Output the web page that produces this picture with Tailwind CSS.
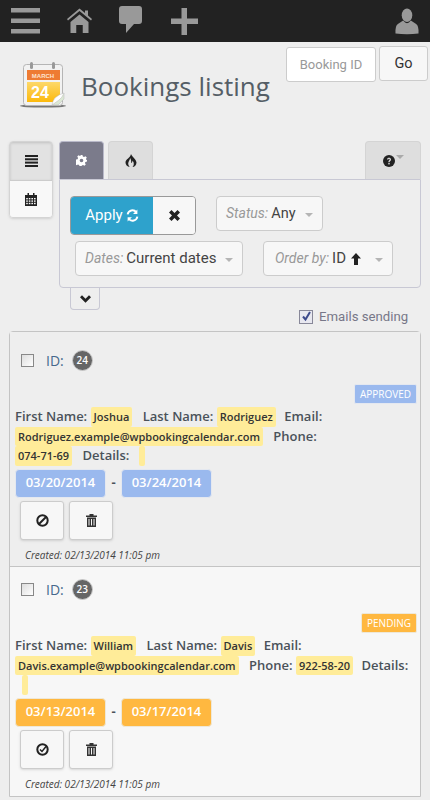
<!DOCTYPE html>
<html lang="en">
<head>
  <meta charset="UTF-8">
  <meta name="viewport" content="width=device-width, initial-scale=1.0"/>
  <title>Bookings listing</title>
  <script src="https://cdn.jsdelivr.net/npm/@tailwindcss/browser@4"></script>
</head>
<body class="bg-[#eeeeee] font-['Open_Sans',sans-serif] overflow-hidden h-[800px]">

  <!-- top bar -->
  <div class="h-[42px] bg-[#222222] flex items-center relative">
    <svg class="ml-[11px]" width="29" height="26" viewBox="0 0 29 26" fill="#999"><rect width="29" height="4.5" y="0"/><rect width="29" height="4.5" y="10.5"/><rect width="29" height="4.5" y="21"/></svg>
    <svg class="ml-[27px]" width="25" height="26" viewBox="0 0 25 26" fill="#999"><path d="M12.5 0.500 L18 5 V2.500 H21 V7.500 L25 11 L24 12.500 L12.5 3 L1 12.500 L0 11 Z"/><path d="M3.500 14 L12.500 6.500 L21.500 14 V25 H15.500 V17 H9.500 V25 H3.500 Z"/><rect x="9.500" y="17" width="6" height="8" fill="#222"/></svg>
    <svg class="ml-[27px] -mt-[3px]" width="23" height="28" viewBox="0 0 23 28" fill="#999"><path d="M3 0 H20 Q23 0 23 3 V15 Q23 18 20 18 H15 L7 27 V18 H3 Q0 18 0 15 V3 Q0 0 3 0 Z"/></svg>
    <svg class="ml-[29px]" width="27" height="27" viewBox="0 0 27 27" fill="#999"><rect x="10.5" y="0" width="5.5" height="27"/><rect x="0" y="10.5" width="27" height="5.5"/></svg>
    <svg class="ml-auto mr-[11px]" width="24" height="27" viewBox="0 0 25 27" fill="#999"><ellipse cx="12.5" cy="7" rx="5.5" ry="7"/><path d="M8.5 12.5 Q12.5 18 16.5 12.5 L22 16 Q25 18 24.5 26 Q12.5 27.5 0.5 26 Q0 18 3 16 Z"/></svg>
  </div>

  <!-- title and booking search -->
  <div class="h-[99px] relative flex">
    <svg class="ml-[20px] mt-[19px]" width="47" height="47" viewBox="0 0 47 47">
      <defs><linearGradient id="calYellow" x1="0" y1="0" x2="0" y2="1"><stop offset="0" stop-color="#fdd86a"/><stop offset="1" stop-color="#fcb90c"/></linearGradient></defs>
      <ellipse cx="23" cy="45" rx="23" ry="1.6" fill="#777"/>
      <rect x="3.500" y="3.500" width="39" height="41" rx="3" fill="#f2f2f2" stroke="#b5b5b5"/>
      <rect x="10" y="1" width="3" height="7" rx="1.500" fill="#999"/>
      <rect x="32" y="1" width="3" height="7" rx="1.500" fill="#999"/>
      <rect x="7" y="9" width="33" height="10" fill="#ee7b33"/>
      <text x="23" y="16.500" text-anchor="middle" font-size="6" font-weight="700" fill="#fde4d0" font-family="Liberation Sans">MARCH</text>
      <rect x="7" y="21" width="33" height="20" fill="url(#calYellow)"/>
      <text x="20" y="37" text-anchor="middle" font-size="16" font-weight="700" fill="#fff" font-family="Liberation Sans">24</text>
      <path d="M32 44 L44 32 V38 L38 44 Z" fill="#dce8d4" stroke="#bbb" stroke-width=".5"/>
      <path d="M32 44 Q33 35 44 32 Q42 37 39 39 Z" fill="#fff" stroke="#bbb" stroke-width=".5"/>
    </svg>
    <h1 class="ml-[14px] mt-[26px] text-[26px] leading-[36px] text-[#555e66] font-normal">Bookings listing</h1>
    <div class="ml-auto mr-[2px] mt-[4px] flex gap-[3px] items-start font-['Roboto',sans-serif] text-[14px]">
      <div class="mt-[1px] w-[90px] h-[35px] bg-white border border-[#cccccc] rounded-[3px] flex items-center justify-center text-[#999999] text-[13px]">Booking ID</div>
      <div class="w-[49px] h-[35px] bg-[#f7f7f7] border border-[#cccccc] rounded-[3px] flex items-center justify-center text-[#333333] text-[14.5px]">Go</div>
    </div>
  </div>

  <!-- toolbar -->
  <div class="flex items-start pl-[9px] h-[190px]">
    <div class="w-[44px] h-[77px] rounded-[4px] border border-[#d4d4d4] shadow-sm flex flex-col overflow-hidden">
      <div class="h-[38px] bg-[#e2e2e2] flex items-center justify-center shadow-[inset_0_1px_3px_rgba(0,0,0,0.15)]">
        <svg width="13" height="12" viewBox="0 0 13 12" fill="#222"><rect width="13" height="2" y="0"/><rect width="13" height="2" y="3.300"/><rect width="13" height="2" y="6.600"/><rect width="13" height="2" y="10"/></svg>
      </div>
      <div class="flex-1 bg-[#f8f8f8] border-t border-[#cccccc] flex items-center justify-center">
        <svg width="12" height="13" viewBox="0 0 12 13" fill="#222"><path d="M0 2 H2.500 V0 H4 V2 H8 V0 H9.500 V2 H12 V13 H0 Z"/><g fill="#f8f8f8"><rect x="1.200" y="5" width="1.600" height="1.400"/><rect x="3.800" y="5" width="1.600" height="1.400"/><rect x="6.400" y="5" width="1.600" height="1.400"/><rect x="9" y="5" width="1.600" height="1.400"/><rect x="1.200" y="7.400" width="1.600" height="1.400"/><rect x="3.800" y="7.400" width="1.600" height="1.400"/><rect x="6.400" y="7.400" width="1.600" height="1.400"/><rect x="9" y="7.400" width="1.600" height="1.400"/><rect x="1.200" y="9.800" width="1.600" height="1.400"/><rect x="3.800" y="9.800" width="1.600" height="1.400"/><rect x="6.400" y="9.800" width="1.600" height="1.400"/><rect x="9" y="9.800" width="1.600" height="1.400"/></g></svg>
      </div>
    </div>

    <div class="ml-[6px] w-[362px]">
      <div class="flex h-[38px] gap-[4px]">
        <div class="w-[45px] bg-[#7b7b8b] border border-[#b9b9c9] border-b-0 rounded-t-[4px] flex items-center justify-center">
          <svg width="11" height="11" viewBox="0 0 24 24" fill="#fff"><path fill-rule="evenodd" d="M10 0h4l1 3.500 2.500 1 3.200-1.800 2.800 2.800-1.800 3.200 1 2.500L24 10v4l-3.500 1-1 2.500 1.800 3.200-2.800 2.800-3.200-1.800-2.500 1-1 2.500h-4l-1-3.500-2.500-1-3.200 1.800-2.800-2.800 1.800-3.200-1-2.500L0 14v-4l3.500-1 1-2.500L2.700 3.300 5.500 0.500l3.200 1.800 1.300-0.800zM12 8a4 4 0 1 0 0 8 4 4 0 0 0 0-8z"/></svg>
        </div>
        <div class="w-[45px] bg-[#dedede] border border-[#d4d4d4] border-b-0 rounded-t-[4px] flex items-center justify-center">
          <svg width="12" height="13" viewBox="0 0 12 13" fill="#222"><path d="M6 0 C7 3 11 5 11.500 8.500 C11.500 11 9.500 13 7.500 13 C9 11.500 9.500 9 7.500 6.500 C7.500 8 6.800 8.800 6 9 C6.500 7 6 5 5 4 C5 6.500 2.500 8 3.500 11 C3.800 12 4.300 12.600 5 13 C2 12.800 0.500 10.500 0.500 8.500 C0.500 5 5.500 4 6 0 Z"/></svg>
        </div>
        <div class="ml-auto w-[56px] bg-[#dedede] border border-[#d4d4d4] border-b-0 rounded-t-[4px] flex items-center justify-center gap-[1px]">
          <svg width="12" height="12" viewBox="0 0 12 12"><circle cx="6" cy="6" r="6" fill="#222"/><path d="M4 4.600 C4 2 8 2 8 4.500 C8 6 6.600 6 6.600 7.300 H5.300 C5.300 5.500 6.700 5.500 6.700 4.500 C6.700 3.600 5.300 3.600 5.300 4.600 Z" fill="#dedede"/><rect x="5.300" y="8" width="1.400" height="1.400" fill="#dedede"/></svg>
          <span class="-mt-[7px] w-0 h-0 border-x-[4px] border-x-transparent border-t-[4px] border-t-[#aaaaaa]"></span>
        </div>
      </div>

      <div class="h-[109px] border border-[#c8c8d4] rounded-b-[4px] bg-[#eeeeee] font-['Roboto',sans-serif] relative">
        <div class="flex pt-[16px] pl-[10px]">
          <div class="flex h-[39px] rounded-[4px] border border-[#999999] overflow-hidden">
            <div class="w-[82px] bg-[#2ea2cc] text-white flex items-center justify-center gap-[3px] text-[15px]">Apply
              <svg width="13" height="13" viewBox="0 0 24 24" fill="none" stroke="#fff" stroke-width="3.500"><path d="M3 10 A9 9 0 0 1 19 6"/><path d="M21 14 A9 9 0 0 1 5 18"/><path d="M21 1 V9 H13" fill="#fff" stroke="none"/><path d="M3 23 V15 H11" fill="#fff" stroke="none"/></svg>
            </div>
            <div class="w-[42px] bg-[#f7f7f7] flex items-center justify-center">
              <svg width="11" height="11" viewBox="0 0 11 11" fill="#222"><path d="M2.500 0 L5.500 3 L8.500 0 L11 2.500 L8 5.500 L11 8.500 L8.500 11 L5.500 8 L2.500 11 L0 8.500 L3 5.500 L0 2.500 Z"/></svg>
            </div>
          </div>
          <div class="ml-[20px] w-[107px] h-[35px] bg-[#f7f7f7] border border-[#cccccc] rounded-[4px] flex items-center pl-[9px]">
            <i class="text-[#999999] text-[14px]">Status:</i><span class="ml-[3px] text-[#444444] text-[14.500px]">Any</span>
            <span class="ml-auto mr-[9px] mt-[2px] w-0 h-0 border-x-[4px] border-x-transparent border-t-[4px] border-t-[#b5b5b5]"></span>
          </div>
        </div>
        <div class="flex pt-[6px] pl-[15px]">
          <div class="w-[168px] h-[35px] bg-[#f7f7f7] border border-[#cccccc] rounded-[4px] flex items-center pl-[9px]">
            <i class="text-[#999999] text-[14px]">Dates:</i><span class="ml-[3px] text-[#444444] text-[15px]">Current dates</span>
            <span class="ml-auto mr-[9px] mt-[2px] w-0 h-0 border-x-[4px] border-x-transparent border-t-[4px] border-t-[#b5b5b5]"></span>
          </div>
          <div class="ml-[20px] w-[130px] h-[35px] bg-[#f7f7f7] border border-[#cccccc] rounded-[4px] flex items-center pl-[11px]">
            <i class="text-[#999999] text-[14px]">Order by:</i><span class="ml-[3px] text-[#444444] text-[15px]">ID</span>
            <svg class="ml-[5px]" width="10" height="12" viewBox="0 0 10 12" fill="#222"><path d="M5 0 L10 5.500 H7 V12 H3 V5.500 H0 Z"/></svg>
            <span class="ml-auto mr-[9px] mt-[2px] w-0 h-0 border-x-[4px] border-x-transparent border-t-[4px] border-t-[#b5b5b5]"></span>
          </div>
        </div>
      </div>

      <div class="relative h-[44px]">
        <div class="absolute left-[11px] -top-px w-[30px] h-[23px] border border-[#c8c8d4] [border-top-style:dashed] rounded-b-[4px] flex items-center justify-center">
          <svg width="11" height="8" viewBox="0 0 11 8" fill="#222"><path d="M0 2.200 L2 0.200 L5.500 3.700 L9 0.200 L11 2.200 L5.500 7.700 Z"/></svg>
        </div>
        <div class="absolute left-[240px] top-[19px] flex items-center gap-[6px] font-['Roboto',sans-serif] text-[13.200px] text-[#777788]">
          <span class="w-[14px] h-[14px] border border-[#888899] bg-[#e8e8f0] flex items-center justify-center">
            <svg width="11" height="11" viewBox="0 0 11 11" fill="none" stroke="#3d4a8c" stroke-width="2"><path d="M2 5.500 L4.500 8.500 L9 1"/></svg>
          </span>
          Emails sending
        </div>
      </div>
    </div>
  </div>

  <!-- bookings -->
  <div class="mx-[9px] border border-[#c4c4c4] rounded-t-[4px]">

    <div class="h-[234px] pt-[18px] bg-[#eeeeee]">
      <div class="flex items-center h-[20px] pl-[11px] text-[14px] text-[#46688c]">
        <span class="w-[13px] h-[13px] border border-[#888888] bg-gradient-to-br from-[#dddddd] to-white"></span>
        <span class="ml-[12px]">ID:</span>
        <span class="ml-[8px] w-[21px] h-[21px] rounded-full bg-[#666666] border border-[#cccccc] text-white text-[10px] font-semibold flex items-center justify-center">24</span>
      </div>
      <div class="flex justify-end mr-[3px] mt-[14px]">
        <span class="h-[20px] px-[5px] bg-[#9ab9ee] border border-[#e4e8f0] rounded-[2px] text-white text-[10px] font-medium flex items-center">APPROVED</span>
      </div>
      <div class="pl-[5px] mt-[3px] text-[13px] leading-[19.500px] font-semibold text-[#4a525a]">
        First Name: <span class="inline-block h-[19.500px] leading-[20px] px-[3px] bg-[#ffec99] rounded-[2px] text-[#333333] text-[11px] align-top">Joshua</span>
        <span class="ml-[7px]">Last Name:</span> <span class="inline-block h-[19.500px] leading-[20px] px-[3px] bg-[#ffec99] rounded-[2px] text-[#333333] text-[11px] align-top">Rodriguez</span>
        <span class="ml-[5px]">Email:</span><br>
        <span class="inline-block h-[19.500px] leading-[20px] px-[3px] bg-[#ffec99] rounded-[2px] text-[#333333] text-[11px] align-top">Rodriguez.example@wpbookingcalendar.com</span>
        <span class="ml-[7px]">Phone:</span><br>
        <span class="inline-block h-[19.500px] leading-[20px] px-[3px] bg-[#ffec99] rounded-[2px] text-[#333333] text-[11px] align-top">074-71-69</span>
        <span class="ml-[7px]">Details:</span>
        <span class="ml-[6px] inline-block w-[6px] h-[19.500px] bg-[#ffec99] rounded-[2px] align-top"></span>
      </div>
      <div class="pl-[5px] mt-[3px] flex items-center">
        <span class="w-[91px] h-[29px] bg-[#9ab9ee] border border-[#e4e8f0] rounded-[4px] text-white text-[13px] font-semibold flex items-center justify-center">03/20/2014</span>
        <span class="w-[15px] text-center font-bold text-[#4a525a] text-[13px]">-</span>
        <span class="w-[91px] h-[29px] bg-[#9ab9ee] border border-[#e4e8f0] rounded-[4px] text-white text-[13px] font-semibold flex items-center justify-center">03/24/2014</span>
      </div>
      <div class="pl-[10px] mt-[3px] flex gap-[5px]">
        <span class="w-[44px] h-[39px] bg-[#f7f7f7] border border-[#cccccc] rounded-[3px] shadow-sm flex items-center justify-center">
          <svg width="13" height="13" viewBox="0 0 13 13" fill="none" stroke="#222" stroke-width="2"><circle cx="6.500" cy="6.500" r="5.200"/><path d="M3 10 L10 3"/></svg>
        </span>
        <span class="w-[44px] h-[39px] bg-[#f7f7f7] border border-[#cccccc] rounded-[3px] shadow-sm flex items-center justify-center">
          <svg width="11" height="13" viewBox="0 0 11 13" fill="#333"><path d="M3.500 0 H7.500 V1.500 H11 V3 H0 V1.500 H3.500 Z"/><path fill-rule="evenodd" d="M1 3.500 H10 V13 H1 Z M2.500 5 V11.500 H3.500 V5 Z M5 5 V11.500 H6 V5 Z M7.500 5 V11.500 H8.500 V5 Z"/></svg>
        </span>
      </div>
      <p class="pl-[15px] mt-[8px] text-[10px] italic text-[#444444]">Created: 02/13/2014 11:05 pm</p>
    </div>

    <div class="h-[230px] pt-[12px] bg-[#f7f7f7] border-t border-[#c4c4c4]">
      <div class="flex items-center h-[20px] pl-[11px] text-[14px] text-[#46688c]">
        <span class="w-[13px] h-[13px] border border-[#888888] bg-gradient-to-br from-[#dddddd] to-white"></span>
        <span class="ml-[12px]">ID:</span>
        <span class="ml-[8px] w-[21px] h-[21px] rounded-full bg-[#666666] border border-[#cccccc] text-white text-[10px] font-semibold flex items-center justify-center">23</span>
      </div>
      <div class="flex justify-end mr-[3px] mt-[14px]">
        <span class="h-[20px] px-[5px] bg-[#ffb840] border border-[#eee8d8] rounded-[2px] text-white text-[10px] font-medium flex items-center">PENDING</span>
      </div>
      <div class="pl-[5px] mt-[3px] text-[13px] leading-[19.500px] font-semibold text-[#4a525a]">
        First Name: <span class="inline-block h-[19.500px] leading-[20px] px-[3px] bg-[#ffec99] rounded-[2px] text-[#333333] text-[11px] align-top">William</span>
        <span class="ml-[7px]">Last Name:</span> <span class="inline-block h-[19.500px] leading-[20px] px-[3px] bg-[#ffec99] rounded-[2px] text-[#333333] text-[11px] align-top">Davis</span>
        <span class="ml-[5px]">Email:</span><br>
        <span class="inline-block h-[19.500px] leading-[20px] px-[3px] bg-[#ffec99] rounded-[2px] text-[#333333] text-[11px] align-top">Davis.example@wpbookingcalendar.com</span>
        <span class="ml-[7px]">Phone:</span> <span class="inline-block h-[19.500px] leading-[20px] px-[3px] bg-[#ffec99] rounded-[2px] text-[#333333] text-[11px] align-top">922-58-20</span>
        <span class="ml-[5px]">Details:</span><br>
        <span class="ml-[7px] inline-block w-[6px] h-[19.500px] bg-[#ffec99] rounded-[2px] align-top"></span>
      </div>
      <div class="pl-[5px] mt-[3px] flex items-center">
        <span class="w-[91px] h-[29px] bg-[#ffb840] border border-[#eee8d8] rounded-[4px] text-white text-[13px] font-semibold flex items-center justify-center">03/13/2014</span>
        <span class="w-[15px] text-center font-bold text-[#4a525a] text-[13px]">-</span>
        <span class="w-[91px] h-[29px] bg-[#ffb840] border border-[#eee8d8] rounded-[4px] text-white text-[13px] font-semibold flex items-center justify-center">03/17/2014</span>
      </div>
      <div class="pl-[10px] mt-[3px] flex gap-[5px]">
        <span class="w-[44px] h-[39px] bg-[#f7f7f7] border border-[#cccccc] rounded-[3px] shadow-sm flex items-center justify-center">
          <svg width="13" height="13" viewBox="0 0 13 13" fill="none" stroke="#222" stroke-width="2"><circle cx="6.500" cy="6.500" r="5.200"/><path d="M4 6.500 L6 8.500 L10 3.500" stroke-width="1.500"/></svg>
        </span>
        <span class="w-[44px] h-[39px] bg-[#f7f7f7] border border-[#cccccc] rounded-[3px] shadow-sm flex items-center justify-center">
          <svg width="11" height="13" viewBox="0 0 11 13" fill="#333"><path d="M3.500 0 H7.500 V1.500 H11 V3 H0 V1.500 H3.500 Z"/><path fill-rule="evenodd" d="M1 3.500 H10 V13 H1 Z M2.500 5 V11.500 H3.500 V5 Z M5 5 V11.500 H6 V5 Z M7.500 5 V11.500 H8.500 V5 Z"/></svg>
        </span>
      </div>
      <p class="pl-[15px] mt-[8px] text-[10px] italic text-[#444444]">Created: 02/13/2014 11:05 pm</p>
    </div>
  </div>
</body>
</html>
